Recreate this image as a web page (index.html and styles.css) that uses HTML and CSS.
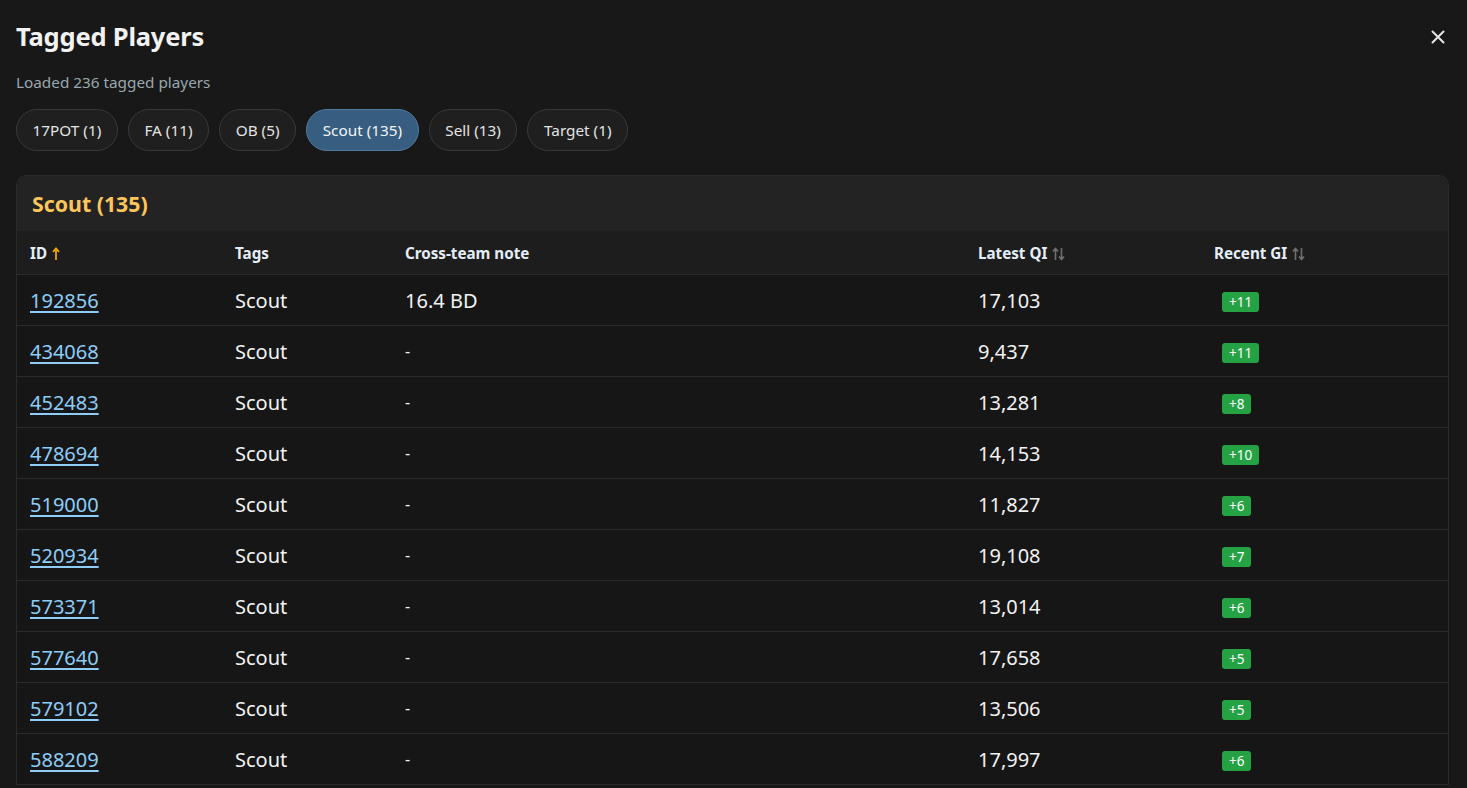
FILE: index.html
```html
<!DOCTYPE html>
<html>
<head>
<meta charset="utf-8">
<link rel="stylesheet" href="styles.css">
</head>
<body>
<div class="modal">
  <div class="top">
    <h1 class="title">Tagged Players</h1>
    <button class="close" aria-label="Close">
      <svg width="14" height="14" viewBox="0 0 14 14"><path d="M1.5 1.5L12.5 12.5M12.5 1.5L1.5 12.5" stroke="#e6e6e6" stroke-width="2" stroke-linecap="round"/></svg>
    </button>
  </div>
  <p class="sub">Loaded 236 tagged players</p>
  <div class="chips">
    <span class="chip">17POT (1)</span>
    <span class="chip">FA (11)</span>
    <span class="chip">OB (5)</span>
    <span class="chip active">Scout (135)</span>
    <span class="chip">Sell (13)</span>
    <span class="chip">Target (1)</span>
  </div>
  <div class="card">
    <div class="card-head">Scout (135)</div>
    <table class="tbl">
      <thead>
        <tr>
          <th class="c-id">ID <svg class="sort" width="8" height="14" viewBox="0 0 8 14"><path d="M4 13V2M1 5L4 1.5L7 5" stroke="#f0a400" stroke-width="1.8" fill="none"/></svg></th>
          <th class="c-tags">Tags</th>
          <th class="c-note">Cross-team note</th>
          <th class="c-qi">Latest QI <svg class="sort" width="13" height="14" viewBox="0 0 13 14"><path d="M3.5 13V2M1 4.5L3.5 1.5L6 4.5M9.5 1V12M7 9.5L9.5 12.5L12 9.5" stroke="#6f6f6f" stroke-width="1.6" fill="none"/></svg></th>
          <th class="c-gi">Recent GI <svg class="sort" width="13" height="14" viewBox="0 0 13 14"><path d="M3.5 13V2M1 4.5L3.5 1.5L6 4.5M9.5 1V12M7 9.5L9.5 12.5L12 9.5" stroke="#6f6f6f" stroke-width="1.6" fill="none"/></svg></th>
        </tr>
      </thead>
      <tbody>
        <tr><td><a href="#">192856</a></td><td>Scout</td><td>16.4 BD</td><td>17,103</td><td><span class="badge">+11</span></td></tr>
        <tr><td><a href="#">434068</a></td><td>Scout</td><td class="dash">-</td><td>9,437</td><td><span class="badge">+11</span></td></tr>
        <tr><td><a href="#">452483</a></td><td>Scout</td><td class="dash">-</td><td>13,281</td><td><span class="badge">+8</span></td></tr>
        <tr><td><a href="#">478694</a></td><td>Scout</td><td class="dash">-</td><td>14,153</td><td><span class="badge">+10</span></td></tr>
        <tr><td><a href="#">519000</a></td><td>Scout</td><td class="dash">-</td><td>11,827</td><td><span class="badge">+6</span></td></tr>
        <tr><td><a href="#">520934</a></td><td>Scout</td><td class="dash">-</td><td>19,108</td><td><span class="badge">+7</span></td></tr>
        <tr><td><a href="#">573371</a></td><td>Scout</td><td class="dash">-</td><td>13,014</td><td><span class="badge">+6</span></td></tr>
        <tr><td><a href="#">577640</a></td><td>Scout</td><td class="dash">-</td><td>17,658</td><td><span class="badge">+5</span></td></tr>
        <tr><td><a href="#">579102</a></td><td>Scout</td><td class="dash">-</td><td>13,506</td><td><span class="badge">+5</span></td></tr>
        <tr><td><a href="#">588209</a></td><td>Scout</td><td class="dash">-</td><td>17,997</td><td><span class="badge">+6</span></td></tr>
      </tbody>
    </table>
  </div>
</div>
</body>
</html>
```

FILE: styles.css
```css
html, body {
  margin: 0;
  padding: 0;
  background: #181818;
  overflow: hidden;
  height: 788px;
}
body {
  font-family: "Noto Sans", "Open Sans", sans-serif;
  color: #ececec;
}
.modal {
  padding: 16px 18px 0 16px;
}
.top {
  display: flex;
  justify-content: space-between;
  align-items: center;
  height: 40px;
}
.title {
  margin: 0;
  font-size: 25.5px;
  font-weight: 700;
  color: #f2f2f2;
  letter-spacing: -0.2px;
}
.close {
  background: none;
  border: 0;
  padding: 0;
  width: 20px;
  height: 20px;
  display: flex;
  align-items: center;
  justify-content: center;
  margin-right: 1px;
  margin-top: 1px;
}
.sub {
  margin: 16px 0 0 0;
  font-size: 15.3px;
  color: #9aa7ad;
  line-height: 20px;
}
.chips {
  display: flex;
  gap: 10px;
  margin-top: 17px;
}
.chip {
  display: inline-flex;
  align-items: center;
  height: 40px;
  padding: 0 15.6px;
  border: 1px solid #383838;
  border-radius: 21px;
  background: #1f1f1f;
  font-size: 15.3px;
  color: #e4e4e4;
}
.chip.active {
  background: #375e80;
  border-color: #4f7aa0;
  color: #f0f4f8;
}
.card {
  margin-top: 24px;
  border: 1px solid #2a2a2a;
  border-bottom: 0;
  border-radius: 10px 10px 0 0;
  overflow: hidden;
  background: #161616;
}
.card-head {
  background: #232323;
  height: 55px;
  display: flex;
  align-items: center;
  padding-left: 15px;
  font-size: 21.3px;
  font-weight: 700;
  color: #fcc65a;
}
.tbl {
  width: 100%;
  border-collapse: collapse;
  table-layout: fixed;
}
.tbl thead th {
  background: #1d1d1d;
  height: 43px;
  text-align: left;
  font-size: 15.2px;
  font-weight: 700;
  color: #e4eef8;
  padding: 0 0 0 13px;
  border-bottom: 1px solid #2c2c2c;
}
.c-id { width: 192px; }
.c-tags { width: 157px; }
.c-note { width: 560px; }
.c-qi { width: 223px; }
.sort {
  vertical-align: -2px;
  margin-left: 1px;
}
.tbl tbody td {
  height: 50px;
  padding: 0 0 0 13px;
  border-bottom: 1px solid #2b2b2b;
  font-size: 20px;
  color: #f2f2f2;
  vertical-align: middle;
}
.tbl tbody td.dash {
  font-size: 16px;
}
.tbl a {
  color: #8ecdf7;
  text-decoration: underline;
  text-underline-offset: 3px;
}
.badge {
  display: inline-block;
  margin-left: 8px;
  background: #25a244;
  color: #ffffff;
  font-size: 13.5px;
  line-height: 20px;
  padding: 0 7px;
  border-radius: 3px;
  vertical-align: middle;
}
```
